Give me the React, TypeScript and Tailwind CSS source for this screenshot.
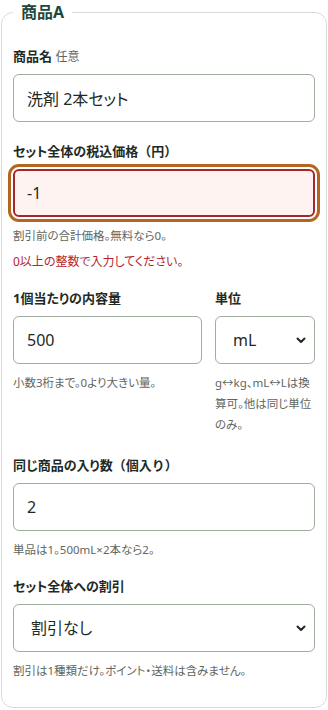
import { type ReactElement } from 'react';

const font = { fontFamily: '"Noto Sans", "Noto Sans CJK JP", sans-serif', fontFeatureSettings: '"palt"' };

const inputBase =
  'w-full h-12 rounded-md border border-[#9fae9f] bg-white px-[13px] text-base text-[#1f2a24] outline-none';

/** 全角括弧はプロポーショナル詰めをしない */
function Paren({ children }: { children: React.ReactNode }): ReactElement {
  return <span className="[font-feature-settings:normal]">{children}</span>;
}

/** 項目ラベル */
function Label({ children }: { children: React.ReactNode }): ReactElement {
  return <label className="block text-[13px] font-bold text-[#1f2a24] mb-[8px] leading-5">{children}</label>;
}

/** 補足テキスト */
function Help({ children }: { children: React.ReactNode }): ReactElement {
  return <p className="mt-2 text-[11.5px] leading-[21px] text-[#5f6661]">{children}</p>;
}

function Chevron(): ReactElement {
  return (
    <svg width="10" height="10" viewBox="0 0 10 10" className="pointer-events-none absolute right-[9px] top-1/2 -translate-y-1/2">
      <path d="M1.5 3.5 L5 7 L8.5 3.5" fill="none" stroke="#1f2a24" strokeWidth="2" strokeLinecap="round" strokeLinejoin="round" />
    </svg>
  );
}

export default function App(): ReactElement {
  return (
    <div style={font} className="bg-white min-h-[710px] px-[1px] pt-0">
      <fieldset className="rounded-xl border border-[#d5ddd5] px-[11px] pt-[22px] pb-[26px]">
        <legend className="px-2 ml-0 text-base font-bold text-[#21483c] leading-6">商品A</legend>

        <div>
          <Label>
            商品名 <span className="text-xs font-normal text-[#5f6661]">任意</span>
          </Label>
          <input className={inputBase} defaultValue="洗剤 2本セット" />
        </div>

        <div className="mt-[19px]">
          <Label>
            セット全体の税込価格<Paren>（円）</Paren>
          </Label>
          <input
            className="w-full h-12 rounded-md border-2 border-[#a8262b] bg-[#fff3f1] px-[12px] text-base text-[#1f2a24] outline-[3px] outline-solid outline-offset-2 outline-[#b4661c]"
            defaultValue="-1"
          />
          <Help>割引前の合計価格。無料なら0。</Help>
          <p className="mt-[6px] text-xs leading-5 text-[#b3262d]">0以上の整数で入力してください。</p>
        </div>

        <div className="mt-[16px] grid grid-cols-[1fr_100px] gap-x-[13px]">
          <div>
            <Label>1個当たりの内容量</Label>
            <input className={inputBase} defaultValue="500" />
            <Help>小数3桁まで。0より大きい量。</Help>
          </div>
          <div>
            <Label>単位</Label>
            <div className="relative">
              <select className={inputBase + ' appearance-none pl-[17px]'} defaultValue="mL">
                <option>g</option>
                <option>kg</option>
                <option>mL</option>
                <option>L</option>
              </select>
              <Chevron />
            </div>
            <Help>g↔kg、mL↔Lは換算可。他は同じ単位のみ。</Help>
          </div>
        </div>

        <div className="mt-[20px]">
          <Label>
            同じ商品の入り数<Paren>（個入り）</Paren>
          </Label>
          <input className={inputBase} defaultValue="2" />
          <Help>単品は1。500mL×2本なら2。</Help>
        </div>

        <div className="mt-[16px]">
          <Label>セット全体への割引</Label>
          <div className="relative">
            <select className={inputBase + ' appearance-none pl-[17px]'} defaultValue="none">
              <option value="none">割引なし</option>
            </select>
            <Chevron />
          </div>
          <Help>割引は1種類だけ。ポイント・送料は含みません。</Help>
        </div>
      </fieldset>
    </div>
  );
}
